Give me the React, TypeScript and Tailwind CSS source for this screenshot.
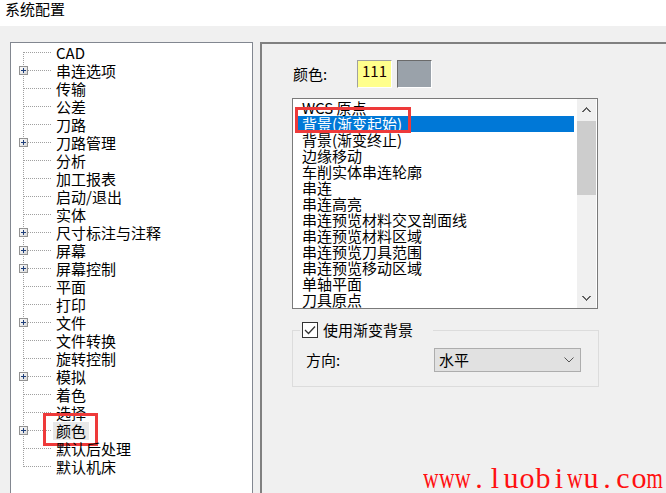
const treeItems: { label: string; plus?: boolean }[] = [
  { label: 'CAD' },
  { label: '串连选项', plus: true },
  { label: '传输' },
  { label: '公差' },
  { label: '刀路' },
  { label: '刀路管理', plus: true },
  { label: '分析' },
  { label: '加工报表' },
  { label: '启动/退出' },
  { label: '实体' },
  { label: '尺寸标注与注释', plus: true },
  { label: '屏幕', plus: true },
  { label: '屏幕控制', plus: true },
  { label: '平面' },
  { label: '打印' },
  { label: '文件', plus: true },
  { label: '文件转换' },
  { label: '旋转控制' },
  { label: '模拟', plus: true },
  { label: '着色' },
  { label: '选择' },
  { label: '颜色', plus: true },
  { label: '默认后处理' },
  { label: '默认机床' },
];

const listItems = [
  'WCS 原点',
  '背景(渐变起始)',
  '背景(渐变终止)',
  '边缘移动',
  '车削实体串连轮廓',
  '串连',
  '串连高亮',
  '串连预览材料交叉剖面线',
  '串连预览材料区域',
  '串连预览刀具范围',
  '串连预览移动区域',
  '单轴平面',
  '刀具原点',
];

const watermark = 'www.luobiwu.com';

const Connector = ({ first, last, plus }: { first: boolean; last: boolean; plus?: boolean }) => (
  <svg width="45" height="18" className="shrink-0" shapeRendering="crispEdges">
    <line
      x1="12.5"
      y1={first ? 8 : 0}
      x2="12.5"
      y2={last ? 9 : 18}
      stroke="#a0a0a0"
      strokeDasharray="1 1"
    />
    <line x1={plus ? 17 : 13} y1="8.5" x2="40" y2="8.5" stroke="#a0a0a0" strokeDasharray="1 1" />
    {plus && (
      <g>
        <defs>
          <linearGradient id="pb" x1="0" y1="0" x2="1" y2="1">
            <stop offset="0" stopColor="#ffffff" />
            <stop offset="1" stopColor="#d8d8d8" />
          </linearGradient>
        </defs>
        <rect x="8.5" y="4.5" width="8" height="8" fill="url(#pb)" stroke="#929292" />
        <rect x="10" y="8" width="5" height="1" fill="#1f3f7a" />
        <rect x="12" y="6" width="1" height="5" fill="#1f3f7a" />
      </g>
    )}
  </svg>
);

export default function App() {
  return (
    <div className="relative w-[666px] h-[493px] overflow-hidden bg-[#f0f0f0] text-black font-['Noto_Sans_CJK_SC','Liberation_Sans',sans-serif] text-[15px]">
      <div className="h-[26px] bg-white pl-[5px] leading-[18px]">系统配置</div>

      <div className="flex pt-[16px]">
        {/* tree */}
        <div className="ml-[10px] w-[243px] h-[470px] shrink-0 border border-[#828790] bg-white pt-[1px]">
          {treeItems.map((item, i) => (
            <div key={item.label} className="relative flex h-[18px] items-center">
              <Connector first={i === 0} last={i === treeItems.length - 1} plus={item.plus} />
              {item.label === '颜色' ? (
                <>
                  <span className="-ml-[3px] bg-[#e8e8e8] px-[3px] leading-[18px] whitespace-nowrap">
                    {item.label}
                  </span>
                  <span className="absolute left-[32px] -top-[9px] w-[55px] h-[33px] border-[3px] border-[#ee3a3a]" />
                </>
              ) : (
                <span className="leading-[18px] whitespace-nowrap">{item.label}</span>
              )}
            </div>
          ))}
        </div>

        {/* settings */}
        <div className="ml-[7px] flex-1 h-[470px] border-t-2 border-l-2 border-[#808080] pl-[30px] pt-[16px]">
          <div className="flex h-[28px] items-start">
            <div className="w-[65px] pl-[1px] leading-[28px]">颜色:</div>
            <div className="w-[35px] h-[28px] border border-t-[#a0a0a0] border-l-[#a0a0a0] border-r-white border-b-white bg-[#ffff8c] pl-[4px] pt-[1px] leading-[18px] text-[#1a0000]">
              111
            </div>
            <div className="ml-[5px] w-[35px] h-[28px] border border-t-[#6a6a6a] border-l-[#6a6a6a] border-r-white border-b-white bg-[#9aa2aa]" />
          </div>

          <div className="mt-[10px] flex w-[306px] h-[211px] border border-[#7a7a7a] bg-white overflow-hidden">
            <div className="flex-1 px-[3px] pt-[1px]">
              {listItems.map((t, i) =>
                i === 1 ? (
                  <div key={t} className="relative h-[16px] bg-[#0078d7] pl-[6px] leading-[15px] text-white whitespace-nowrap">
                    {t}
                    <span className="absolute -left-[1px] -top-[9px] w-[116px] h-[26px] border-[3px] border-[#ee3a3a]" />
                  </div>
                ) : (
                  <div key={t} className="h-[16px] pl-[6px] leading-[15px] whitespace-nowrap">
                    {t}
                  </div>
                )
              )}
            </div>
            <div className="mr-[1px] flex w-[19px] flex-col bg-[#f0f0f0]">
              <div className="flex h-[22px] items-center justify-center">
                <svg width="9" height="6" viewBox="0 0 9 6" shapeRendering="crispEdges">
                  <path d="M0.5 5 L4.5 1 L8.5 5" fill="none" stroke="#606060" strokeWidth="1.6" />
                </svg>
              </div>
              <div className="h-[74px] bg-[#cdcdcd]" />
              <div className="flex-1" />
              <div className="flex h-[20px] items-center justify-center">
                <svg width="9" height="6" viewBox="0 0 9 6" shapeRendering="crispEdges">
                  <path d="M0.5 1 L4.5 5 L8.5 1" fill="none" stroke="#606060" strokeWidth="1.6" />
                </svg>
              </div>
            </div>
          </div>

          <fieldset className="mt-[13px] w-[307px] border border-[#dcdcdc] pl-[7px] pb-[14px]">
            <legend className="px-[2px] pr-[20px]">
              <div className="flex h-[16px] items-center">
                <div className="flex w-[16px] h-[16px] items-center justify-center border border-[#333333] bg-white">
                  <svg width="12" height="10" viewBox="0 0 12 10">
                    <path d="M1 5 L4.5 8.5 L11 1.5" fill="none" stroke="#333333" strokeWidth="1.3" />
                  </svg>
                </div>
                <span className="ml-[5px] leading-[16px] whitespace-nowrap">使用渐变背景</span>
              </div>
            </legend>
            <div className="mt-[10px] flex h-[24px] items-center pl-[6px]">
              <div className="w-[128px] leading-[18px]">方向:</div>
              <div className="flex w-[147px] h-[24px] items-center justify-between border border-[#adadad] bg-[#e1e1e1] pl-[4px] pr-[6px]">
                <span className="leading-[18px]">水平</span>
                <svg width="10" height="6" viewBox="0 0 10 6">
                  <path d="M0.5 0.5 L5 5 L9.5 0.5" fill="none" stroke="#555555" strokeWidth="1" />
                </svg>
              </div>
            </div>
          </fieldset>
        </div>
      </div>

      {/* watermark */}
      <div className="absolute left-[423px] top-[463px] flex text-[30px] leading-[30px] text-[#ff1010] font-['Liberation_Serif',serif]">
        {watermark.split('').map((c, i) => (
          <span key={i} className="flex w-[16px] justify-center overflow-visible">
            {c === 'w' ? (
              <span className="inline-block scale-x-[0.72]">w</span>
            ) : c === 'm' ? (
              <span className="inline-block scale-x-[0.7]">m</span>
            ) : (
              c
            )}
          </span>
        ))}
      </div>
    </div>
  );
}
